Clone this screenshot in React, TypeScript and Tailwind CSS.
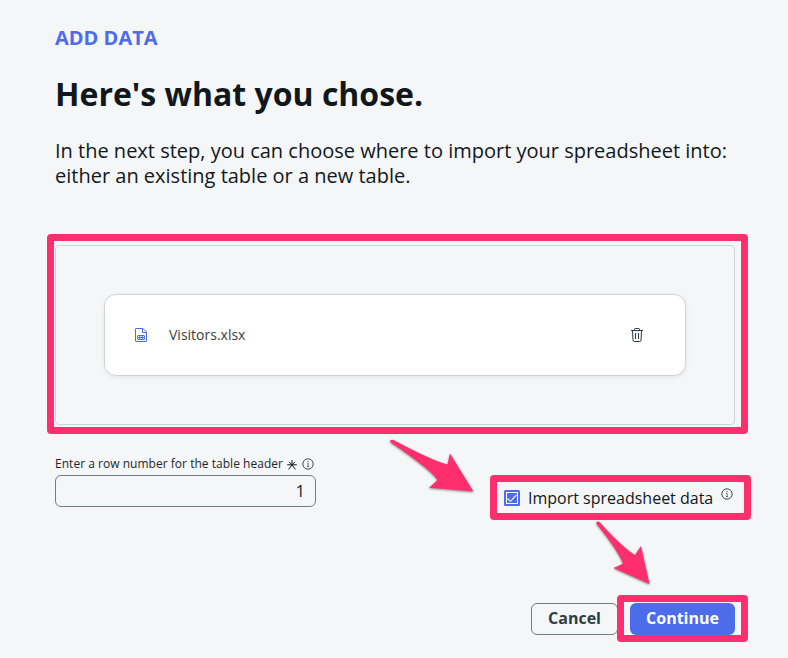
import type { ReactNode } from "react";

function InfoIcon({ className }: { className?: string }) {
  return (
    <svg viewBox="0 0 12 12" width="12" height="12" fill="none" stroke="#2b383f" className={className}>
      <circle cx="6" cy="6" r="5.2" strokeWidth="0.9" />
      <path d="M5.2 5.3H6.1V8.6M5 8.6H7.2" strokeWidth="0.7" />
      <circle cx="6" cy="3.6" r="0.6" fill="#2b383f" stroke="none" />
    </svg>
  );
}

function AsteriskIcon() {
  return (
    <svg viewBox="0 0 10 10" width="10" height="10" fill="none" stroke="#10181b" strokeWidth="1.1" className="mt-0.5 ml-1">
      <path d="M5 0V5M.2 4.8H9.800M1.600 9.400L5 5L8.400 9.400M2 1.800L5 4.800L8 1.800" strokeWidth="1" />
    </svg>
  );
}

function SheetIcon() {
  return (
    <svg viewBox="0 0 12 14" width="12" height="14" fill="none" stroke="#4c6cea">
      <path d="M.5 1Q.5.5 1 .5H8L11.5 4V13Q11.5 13.5 11 13.5H1Q.5 13.5.5 13ZM7.5.5V4.5H11.5" />
      <rect x="2.5" y="7.5" width="7" height="4" rx=".5" />
      <path d="M2.5 9.5H9.5M4.8 7.5V11.5M7.2 7.5V11.5" />
    </svg>
  );
}

function TrashIcon() {
  return (
    <svg viewBox="0 0 12 14" width="12" height="14" fill="none" stroke="#2b383f">
      <path d="M0 2.5H12M3.5 2.5V1.3Q3.5.5 4.3.5H7.7Q8.5.5 8.5 1.3V2.5M1.5 2.5L2 12.3Q2.1 13.5 3.2 13.5H8.8Q9.9 13.5 10 12.3L10.5 2.5M4.5 5V11M7.5 5V11" />
    </svg>
  );
}

function Checkbox() {
  return (
    <svg viewBox="0 0 16 16" width="16" height="16" fill="none">
      <rect width="16" height="16" rx="1.5" fill="#4c6cea" />
      <rect x="2.5" y="2.5" width="11" height="11" stroke="#fff" strokeWidth="1" />
      <path d="M3.5 8.5L6.5 11.3L12.5 4.8" stroke="#fff" strokeWidth="1.1" />
    </svg>
  );
}

function Highlight({ className }: { className: string }) {
  return <div className={`pointer-events-none absolute rounded-[4px] border-[7px] border-[#ff2f6d] ${className}`} />;
}

function Arrows() {
  return (
    <svg
      viewBox="0 0 788 658"
      className="pointer-events-none absolute inset-0 h-[658px] w-[788px] drop-shadow-[0_1px_1px_rgba(0,0,0,0.45)]"
      fill="#ff2f6d"
    >
      <path d="M390.2 440.8Q391.5 439 394 440.3Q433 461 447.500 464.500L450 453.500L473.500 491.500L429 487.800L437.500 480Q430 469 391.500 443Q389.700 442 390.200 440.800Z" />
      <path d="M596.500 522Q598 520.800 600 522.500Q622 547 635 555L641 546L649.500 584L613.500 568L623 563.800Q619 552 597 524.500Q595.800 523 596.500 522Z" />
    </svg>
  );
}

function Label({ children }: { children: ReactNode }) {
  return (
    <label className="flex h-4 items-center whitespace-nowrap text-[12px] tracking-[0.025px] text-[#1b272c]">
      {children}
    </label>
  );
}

export default function App() {
  return (
    <div className="relative h-[658px] w-[788px] overflow-hidden bg-[#f5f6f8] font-['Open_Sans',sans-serif] text-[#10181b]">
      <main className="flex w-[735px] flex-col pl-[55px]">
        <p className="mt-6 text-[20px] leading-7 font-bold text-[#4c6cea]">ADD DATA</p>
        <h1 className="mt-5 text-[32px] leading-[44px] font-bold">Here's what you chose.</h1>
        <p className="mt-[22px] text-[20px] leading-[25px] whitespace-nowrap">
          In the next step, you can choose where to import your spreadsheet into:
          <br />
          either an existing table or a new table.
        </p>

        <section className="mt-[57px] h-[180px] rounded-[4px] border border-[#cfd5d6] px-12 py-12">
          <div className="flex h-[82px] items-center rounded-[12px] border border-[#cfd5d6] bg-white pr-[42px] pl-[30px] shadow-[0_1px_4px_rgba(0,0,0,0.08)]">
            <SheetIcon />
            <span className="mb-px ml-[22px] text-[14px] text-[#3d3d3d]">Visitors.xlsx</span>
            <button className="ml-auto" aria-label="Delete">
              <TrashIcon />
            </button>
          </div>
        </section>

        <div className="mt-[31px] flex h-[51px] justify-between">
          <div className="w-[261px]">
            <Label>
              Enter a row number for the table header
              <AsteriskIcon />
              <InfoIcon className="ml-[5px]" />
            </Label>
            <div className="mt-[3px] flex h-8 items-center justify-end rounded-[6px] border border-[#6f7d84] pr-[10px] text-[16px]">
              1
            </div>
          </div>
          <div className="mt-[30px] flex h-6 w-[231px] items-center">
            <Checkbox />
            <span className="ml-2 text-[16px] whitespace-nowrap">Import spreadsheet data</span>
            <InfoIcon className="mb-2 ml-2" />
          </div>
        </div>

        <footer className="mt-24 flex h-8 justify-end gap-3 text-[16px] font-bold">
          <button className="w-[87px] rounded-[6px] border border-[#6f7d84] pb-0.5 text-[#2f3d43]">Cancel</button>
          <button className="w-[105px] rounded-[6px] bg-[#4c6cea] pb-0.5 text-white">Continue</button>
        </footer>
      </main>

      <Highlight className="top-[234px] left-[47px] h-[200px] w-[701px]" />
      <Highlight className="top-[475px] left-[490px] h-[45px] w-[261px]" />
      <Highlight className="top-[595px] left-[617px] h-[47px] w-[131px]" />
      <Arrows />
    </div>
  );
}
